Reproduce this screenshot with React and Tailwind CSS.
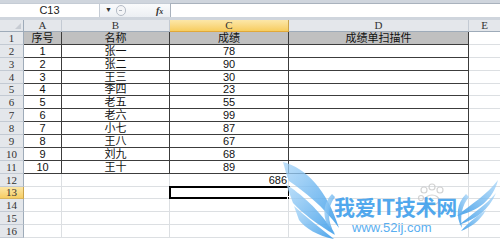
import React from 'react';

const font = { fontFamily: '"Liberation Sans", "Noto Sans CJK SC", sans-serif' };

const data = [
  ['序号', '名称', '成绩', '成绩单扫描件'],
  ['1', '张一', '78', ''],
  ['2', '张二', '90', ''],
  ['3', '王三', '30', ''],
  ['4', '李四', '23', ''],
  ['5', '老五', '55', ''],
  ['6', '老六', '99', ''],
  ['7', '小七', '87', ''],
  ['8', '王八', '67', ''],
  ['9', '刘九', '68', ''],
  ['10', '王十', '89', ''],
];

const colWidths = ['w-[38px]', 'w-[108px]', 'w-[119px]', 'w-[180px]'];

function rowHeightClass(i) {
  const h = Math.round(32 + 12.875 * i) - Math.round(32 + 12.875 * (i - 1));
  return h === 13 ? 'h-[13px]' : 'h-[12px]';
}

function Row({ n }) {
  const inTable = n <= 11;
  const values = inTable ? data[n - 1] : ['', '', n === 12 ? '686' : '', ''];
  const selected = n === 13;
  return (
    <div className={`flex ${rowHeightClass(n)}`}>
      <div
        className={`w-[24px] shrink-0 flex items-center justify-center text-[11px] text-[#333] border-r border-b ${
          selected
            ? 'bg-gradient-to-b from-[#fbe6a6] to-[#f6cd62] border-r-[#c9a24a] border-b-[#d8b45c]'
            : 'bg-[#e4e7eb] border-r-[#9eabb9] border-b-[#c3cad3]'
        }`}
        style={{ fontFamily: '"Liberation Serif", serif' }}
      >
        {n}
      </div>
      {values.map((v, c) => (
        <div
          key={c}
          className={`${colWidths[c]} shrink-0 relative flex items-center text-[11px] leading-none text-[#111] border-r border-b ${
            inTable ? 'border-[#3c3c3c]' : 'border-[#dcdfe2]'
          } ${n === 1 ? 'bg-[#c0c0c0]' : 'bg-white'} ${
            n === 12 && c === 2 ? 'justify-end pr-[1px]' : 'justify-center'
          }`}
        >
          {v}
          {selected && c === 2 && (
            <div className="absolute left-[-1px] top-[-1px] right-[-2px] bottom-[-1px] border-2 border-black">
              <div className="absolute right-[-4px] bottom-[-4px] w-[5px] h-[5px] bg-black border border-white" />
            </div>
          )}
        </div>
      ))}
      <div className="flex-1 border-b border-[#dcdfe2] bg-white" />
    </div>
  );
}

function Watermark() {
  return (
    <div className="absolute inset-0 pointer-events-none">
      <svg width="500" height="242" className="absolute left-0 top-0">
        <defs>
          <linearGradient id="wl" x1="0" y1="0" x2="1" y2="1">
            <stop offset="0" stopColor="#a8d5f8" stopOpacity="0.75" />
            <stop offset="1" stopColor="#3a9be8" stopOpacity="0.9" />
          </linearGradient>
          <linearGradient id="wr" x1="1" y1="0" x2="0" y2="1">
            <stop offset="0" stopColor="#a8d5f8" stopOpacity="0.75" />
            <stop offset="1" stopColor="#3a9be8" stopOpacity="0.9" />
          </linearGradient>
        </defs>
        {/* left wing */}
        <path d="M283 162 C306 168 327 190 339 228 C323 206 305 192 289 181 C286 175 285 168 283 162 Z" fill="url(#wl)" />
        <path d="M286 184 C300 194 319 208 335 235 C317 224 302 213 293 203 Z" fill="url(#wl)" />
        <path d="M294 206 C306 217 320 228 334 239 C318 236 305 228 299 220 Z" fill="url(#wl)" />
        <path d="M332 194 C322 204 321 222 335 234 C327 222 327 207 335 197 Z" fill="url(#wl)" />
        {/* right wing */}
        <path d="M498 180 C493 200 478 211 457 216 C471 204 487 195 498 180 Z" fill="url(#wr)" />
        <path d="M496 193 C489 210 476 219 459 225 C473 213 486 205 496 193 Z" fill="url(#wr)" />
        <path d="M486 210 C480 221 471 227 461 231 C469 222 477 216 486 210 Z" fill="url(#wr)" />
        <path d="M466 194 C457 203 455 216 462 228 C460 216 462 205 469 197 Z" fill="url(#wr)" />
        {/* faint paw */}
        <g fill="none" stroke="#c9c9c9" strokeWidth="1.2" opacity="0.8">
          <circle cx="424" cy="190" r="3" />
          <circle cx="432" cy="187" r="3" />
          <circle cx="440" cy="190" r="3" />
          <ellipse cx="432" cy="200" rx="7" ry="5" />
          <circle cx="421" cy="198" r="2.5" />
        </g>
      </svg>
      <div
        className="absolute left-[334px] top-[196px] text-[21px] leading-none font-bold text-[#3f9fec] opacity-90 tracking-[-0.3px]"
        style={{ fontFamily: '"Noto Sans CJK SC", "Liberation Sans", sans-serif' }}
      >
        我爱IT技术网
      </div>
      <div
        className="absolute left-[352px] top-[221px] text-[13px] leading-none text-[#59aef0]"
        style={{ fontFamily: '"Liberation Sans", sans-serif' }}
      >
        www.52ij.com
      </div>
    </div>
  );
}

export default function App() {
  const rows = [];
  for (let i = 1; i <= 16; i++) rows.push(<Row key={i} n={i} />);

  return (
    <div className="relative w-[500px] h-[242px] overflow-hidden bg-white" style={font}>
      {/* formula bar */}
      <div className="h-[3px] bg-[#cfd5dd]" />
      <div className="h-[14px] flex bg-white">
        <div className="w-[100px] border-t border-r border-[#c5ccd5] flex items-center justify-center text-[11px] text-[#222]">
          C13
        </div>
        <div className="w-[70px] flex items-center bg-gradient-to-b from-[#fafbfc] to-[#eceff3] border-t border-[#c5ccd5]">
          <span className="ml-[5px] text-[7px] text-[#333]">▼</span>
          <div className="ml-[4px] w-[10px] h-[11px] rounded-full border border-[#b5bcc6] bg-[#f4f5f7] flex items-center justify-center">
            <div className="w-[3px] h-[1px] bg-[#aab2bc]" />
          </div>
          <span className="ml-[30px] text-[10px] italic font-bold text-[#333]" style={{ fontFamily: '"Liberation Serif", serif' }}>
            f<span className="text-[8px]">x</span>
          </span>
        </div>
        <div className="flex-1 border-t border-l border-[#a9b2bd] bg-white" />
      </div>
      <div className="h-[3px] bg-[#cfd5dd]" />

      {/* column headers */}
      <div className="flex h-[12px] text-[11px] text-[#333]" style={{ fontFamily: '"Liberation Serif", serif' }}>
        <div className="w-[24px] shrink-0 relative bg-[#e4e7eb] border-r border-b border-[#9eabb9]">
          <div className="absolute right-[2px] bottom-[2px] w-0 h-0 border-l-[6px] border-l-transparent border-b-[6px] border-b-[#c7ccd3]" />
        </div>
        <div className="w-[38px] shrink-0 flex items-center justify-center bg-[#e4e7eb] border-r border-r-[#c3cad3] border-b border-b-[#9eabb9]">A</div>
        <div className="w-[108px] shrink-0 flex items-center justify-center bg-[#e4e7eb] border-r border-r-[#c3cad3] border-b border-b-[#9eabb9]">B</div>
        <div className="w-[119px] shrink-0 flex items-center justify-center bg-gradient-to-b from-[#fce7a8] to-[#f7cd5e] border-r border-r-[#c9a24a] border-b border-b-[#e0a83a]">C</div>
        <div className="w-[180px] shrink-0 flex items-center justify-center bg-[#e4e7eb] border-r border-r-[#c3cad3] border-b border-b-[#9eabb9]">D</div>
        <div className="flex-1 flex items-center justify-center bg-[#e4e7eb] border-b border-[#9eabb9]">E</div>
      </div>

      {rows}

      <Watermark />
    </div>
  );
}
